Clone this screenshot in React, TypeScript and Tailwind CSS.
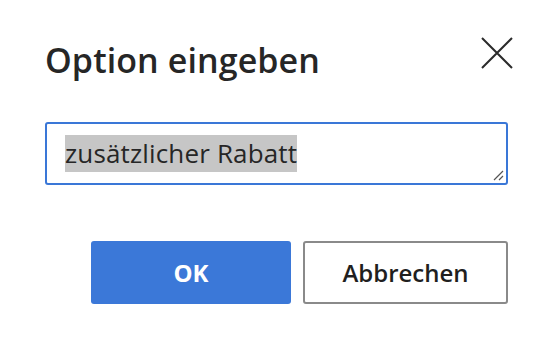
import { useState } from "react";

export default function App() {
  const [value] = useState("zusätzlicher Rabatt");

  return (
    <div
      className="w-[552px] h-[356px] bg-white text-[#262626] pl-[45px] pr-[44px] pt-[38px]"
      style={{ fontFamily: '"Open Sans", "Noto Sans", sans-serif' }}
    >
      <div className="flex items-start justify-between h-[44px]">
        <h1 className="text-[34px] leading-[44px] font-semibold tracking-[0.1px]">Option eingeben</h1>
        <button className="-mt-[1px] -mr-[5px] w-[32px] h-[32px] text-[#2b2b2b]" aria-label="Schließen">
          <svg viewBox="0 0 32 32" className="w-[32px] h-[32px]" fill="none" stroke="currentColor" strokeWidth="2">
            <path d="M1 1 L31 31 M31 1 L1 31" />
          </svg>
        </button>
      </div>

      <div className="relative mt-[40px] h-[63px] rounded-[3px] border-2 border-[#3a77d7] pl-[18px] pt-[11px]">
        <span className="bg-[#c6c6c6] text-[26px] leading-[37px] h-[37px] inline-block align-top tracking-[0.15px]">{value}</span>
        <svg className="absolute right-[2px] bottom-[2px]" width="12" height="12" viewBox="0 0 12 12" fill="none" stroke="#555" strokeWidth="1.2">
          <path d="M2 11 L11 2 M7 11 L11 7" />
        </svg>
      </div>

      <div className="flex justify-end gap-[12px] mt-[56px]">
        <button className="w-[200px] h-[63px] rounded-[3px] bg-[#3b78d8] text-white text-[24px] font-bold">
          OK
        </button>
        <button className="w-[205px] h-[63px] rounded-[3px] border-2 border-[#8a8a8a] bg-white text-[#1f1f1f] text-[24px] font-semibold">
          Abbrechen
        </button>
      </div>
    </div>
  );
}
